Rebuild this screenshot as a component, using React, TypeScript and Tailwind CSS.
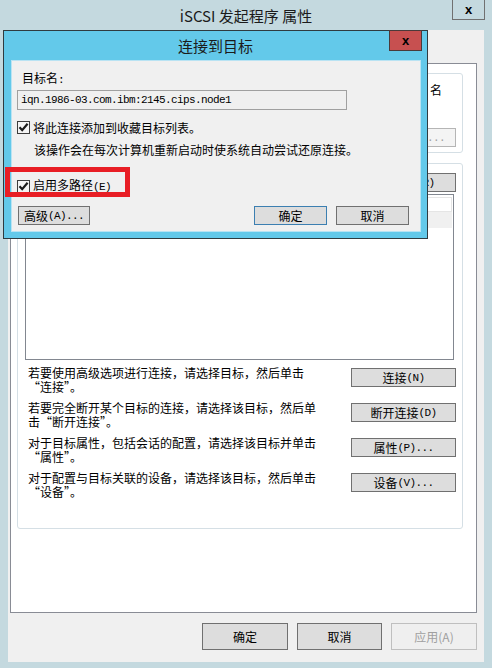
import type { ReactNode } from "react";

function Lat({ children }: { children: ReactNode }) {
  return <span className="font-['Liberation_Mono',monospace] text-[11px] tracking-[-0.6px]">{children}</span>;
}

interface BtnProps {
  children: ReactNode;
  className?: string;
}

function Btn({ children, className = "" }: BtnProps) {
  return (
    <div
      className={
        "flex shrink-0 items-center justify-center border text-[12px] leading-[12px] " + className
      }
    >
      {children}
    </div>
  );
}

function CheckBox() {
  return (
    <div className="flex h-[13px] w-[13px] shrink-0 items-center justify-center border border-[#3c3c3c] bg-[#f4f4f4]">
      <svg width="11" height="11" viewBox="0 0 11 11">
        <path d="M1.5 5.2 L4.2 8.2 L9.6 1.8" stroke="#1a1a1a" strokeWidth="2.2" fill="none" />
      </svg>
    </div>
  );
}

const rows = [
  { text: ["若要使用高级选项进行连接，请选择目标，然后单击", "“连接”。"], btn: "连接", key: "N", dots: false },
  { text: ["若要完全断开某个目标的连接，请选择该目标，然后单", "击“断开连接”。"], btn: "断开连接", key: "D", dots: false },
  { text: ["对于目标属性，包括会话的配置，请选择该目标并单击", "“属性”。"], btn: "属性", key: "P", dots: true },
  { text: ["对于配置与目标关联的设备，请选择该目标，然后单击", "“设备”。"], btn: "设备", key: "V", dots: true },
];

export default function App() {
  return (
    <div className="relative h-[668px] w-[492px] overflow-hidden bg-[#c4d9df] font-['Noto_Sans_CJK_SC',sans-serif] text-black">
      {/* title bar */}
      <div className="relative flex h-[30px] items-center justify-center">
        <span className="text-[15px] leading-[15px] text-[#1b1b1b]">iSCSI 发起程序 属性</span>
        <div className="absolute right-[7px] top-0 flex h-[20px] w-[33px] items-center justify-center border border-t-0 border-[#707070]">
          <span className="font-['Liberation_Sans',sans-serif] text-[13px] font-bold leading-[13px]">x</span>
        </div>
      </div>

      {/* client area */}
      <div className="mx-[8px] flex h-[632px] flex-col bg-[#f0f0f0]">
        <div className="ml-[2px] mt-[33px] flex h-[550px] w-[467px] flex-col border border-[#898c95] bg-white">
          {/* quick connect group (mostly under the dialog) */}
          <div className="ml-[6px] mt-[9px] flex h-[80px] w-[446px] flex-col rounded-[3px] border border-[#d5dfe5]">
            <div className="pr-[20px] pt-[9px] text-right text-[12px] leading-[13px]">名</div>
            <div className="mt-[32px] flex justify-end pr-[6px]">
              <Btn className="h-[19px] w-[116px] !justify-end border-[#b5b5b5] bg-[#f4f4f4] pr-[10px] text-[#a0a0a0]">
                <Lat>...</Lat>
              </Btn>
            </div>
          </div>

          {/* discovered targets group */}
          <div className="ml-[6px] mt-[10px] flex h-[366px] w-[446px] flex-col rounded-[3px] border border-[#d5dfe5]">
            <div className="mt-[9px] flex justify-end pr-[6px]">
              <Btn className="h-[19px] w-[85px] border-[#707070] bg-[#dddddd]">
                刷新<Lat>(R)</Lat>
              </Btn>
            </div>
            <div className="ml-[7px] mt-[2px] flex h-[166px] w-[429px] flex-col border border-[#828790] bg-white">
              <div className="mx-[1px] mt-[2px] h-[15px] border border-[#e5e5e5]" />
              <div className="mx-[1px] h-[16px] bg-[#f0f0f0]" />
            </div>

            <div className="mt-[6px] flex flex-col gap-[7px]">
              {rows.map((r) => (
                <div key={r.key} className="flex justify-between pl-[10px] pr-[6px]">
                  <div className="text-[12px] leading-[14px]">
                    <div>{r.text[0]}</div>
                    <div>{r.text[1]}</div>
                  </div>
                  <Btn className="mt-[2px] h-[19px] w-[105px] border-[#707070] bg-[#dddddd]">
                    {r.btn}
                    <Lat>
                      ({r.key}){r.dots ? "..." : ""}
                    </Lat>
                  </Btn>
                </div>
              ))}
            </div>
          </div>
        </div>

        {/* bottom buttons */}
        <div className="mt-[10px] flex justify-end gap-[9px] pr-[7px]">
          <Btn className="h-[27px] w-[86px] border-[#707070] bg-[#dddddd]">确定</Btn>
          <Btn className="h-[27px] w-[85px] border-[#707070] bg-[#dddddd]">取消</Btn>
          <Btn className="h-[27px] w-[86px] border-[#bfbfbf] bg-[#efefef] text-[#a0a0a0]">应用(A)</Btn>
        </div>
      </div>

      {/* connect to target dialog */}
      <div className="absolute left-[3px] top-[30px] flex h-[209px] w-[425px] flex-col border border-[#2f3b40] bg-[#63c9ea]">
        <div className="relative flex h-[29px] items-center justify-center">
          <span className="text-[15px] leading-[15px] text-[#1b1b1b]">连接到目标</span>
          <div className="absolute right-[5px] top-[-1px] flex h-[21px] w-[33px] items-center justify-center border border-[#4a3a3a] bg-[#c75050]">
            <span className="font-['Liberation_Sans',sans-serif] text-[13px] font-bold leading-[13px]">x</span>
          </div>
        </div>
        <div className="ml-[7px] flex h-[172px] w-[410px] flex-col border border-[#b9e3f3] bg-[#f0f0f0] text-[12px] leading-[12px]">
          <div className="pl-[10px] pt-[11px]">
            目标名<Lat>:</Lat>
          </div>
          <div className="ml-[5px] mt-[4px] flex h-[20px] w-[330px] items-center border border-[#a0a0a0] pl-[3px]">
            <Lat>iqn.1986-03.com.ibm:2145.cips.node1</Lat>
          </div>
          <div className="ml-[5px] mt-[11px] flex items-center gap-[3px]">
            <CheckBox />
            <span>将此连接添加到收藏目标列表。</span>
          </div>
          <div className="pl-[22px] pt-[10px]">该操作会在每次计算机重新启动时使系统自动尝试还原连接。</div>
          <div className="ml-[5px] mt-[23px] flex items-center gap-[3px]">
            <CheckBox />
            <span>
              启用多路径<Lat>(E)</Lat>
            </span>
          </div>
          <div className="mt-[13px] flex items-center">
            <Btn className="ml-[6px] h-[19px] w-[72px] border-[#707070] bg-[#dddddd]">
              高级<Lat>(A)...</Lat>
            </Btn>
            <div className="ml-auto mr-[11px] flex gap-[9px]">
              <Btn className="h-[19px] w-[73px] border-[#3c7fb1] bg-[#dddddd]">确定</Btn>
              <Btn className="h-[19px] w-[73px] border-[#707070] bg-[#dddddd]">取消</Btn>
            </div>
          </div>
        </div>
      </div>

      {/* red highlight annotation */}
      <div className="absolute left-[5px] top-[167px] h-[30px] w-[125px] border-[5px] border-[#e81e25]" />
    </div>
  );
}
